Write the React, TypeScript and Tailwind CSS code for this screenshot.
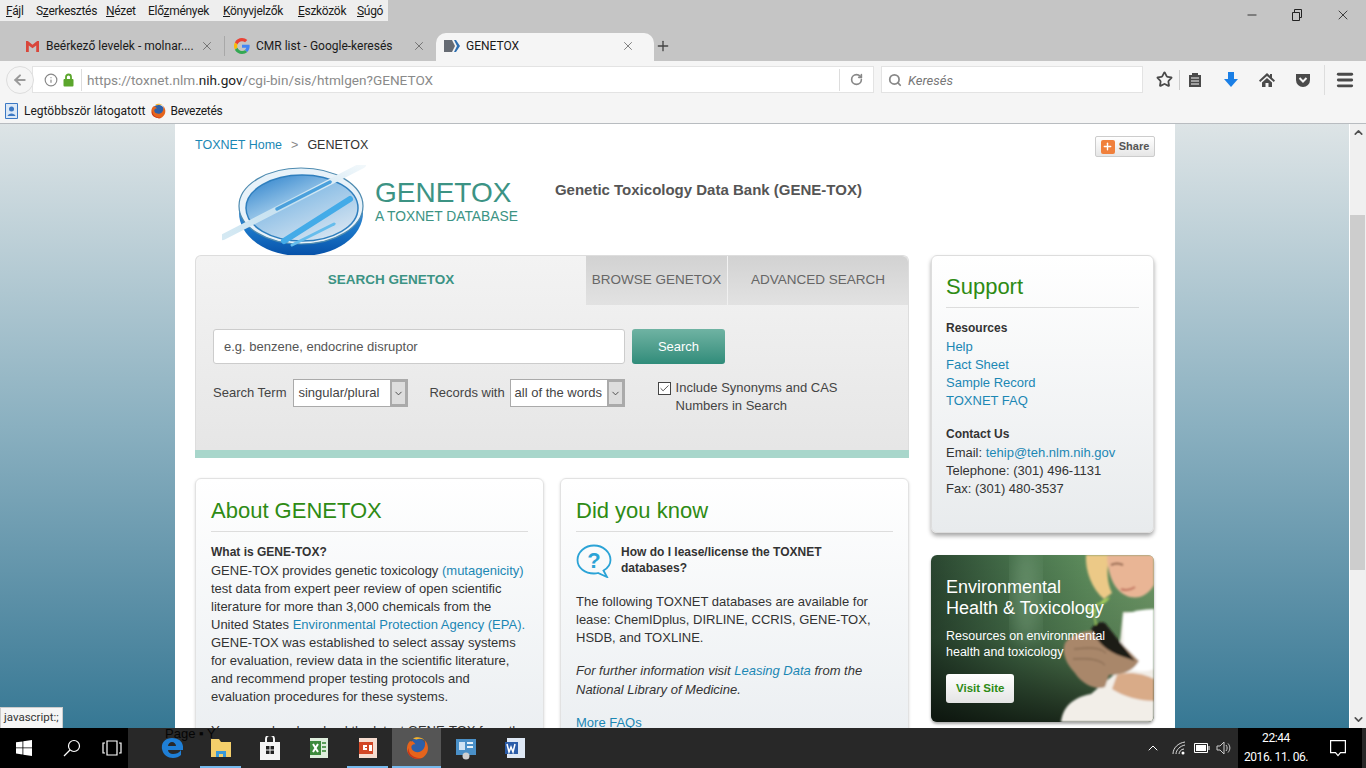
import { ArrowLeft, Check, ChevronDown, ChevronUp, Info, Menu, Minus, Plus, RotateCw, Search, Star, X } from "lucide-react"

const chromeFont = "font-['Roboto',sans-serif]"
const pageFont = "font-['Liberation_Sans',Arial,sans-serif]"

const menus = [
  { before: "", key: "F", after: "ájl", width: "w-[18px]" },
  { before: "S", key: "z", after: "erkesztés", width: "w-[58px]" },
  { before: "", key: "N", after: "ézet", width: "w-[30px]" },
  { before: "Elő", key: "z", after: "mények", width: "w-[63px]" },
  { before: "", key: "K", after: "önyvjelzők", width: "w-[63px]" },
  { before: "", key: "E", after: "szközök", width: "w-[47px]" },
  { before: "", key: "S", after: "úgó", width: "w-[27px]" },
]

const GmailIcon = () => (
  <svg width="15" height="13" viewBox="0 0 16 14">
    <path d="M1 1h2l5 4 5-4h2v12h-3V6L8 9 4 6v7H1z" fill="#d9463a" />
  </svg>
)

const GoogleIcon = () => (
  <svg width="16" height="16" viewBox="0 0 48 48">
    <path fill="#EA4335" d="M24 9.500c3.500 0 6.700 1.300 9.100 3.500l6.800-6.800C35.800 2.400 30.300 0 24 0 14.600 0 6.500 5.400 2.600 13.200l7.900 6.200C12.400 13.700 17.700 9.500 24 9.500z" />
    <path fill="#4285F4" d="M47 24.500c0-1.600-.1-3.100-.4-4.500H24v9h12.900c-.6 3-2.200 5.500-4.700 7.200l7.300 5.700C43.800 37.900 47 31.800 47 24.500z" />
    <path fill="#FBBC05" d="M10.500 28.600c-.5-1.400-.8-3-.8-4.600s.3-3.200.8-4.600l-7.900-6.200C.9 16.500 0 20.100 0 24s.9 7.500 2.600 10.800z" />
    <path fill="#34A853" d="M24 48c6.500 0 11.900-2.100 15.900-5.800l-7.300-5.700c-2.200 1.500-5 2.300-8.600 2.300-6.300 0-11.600-4.200-13.500-9.900l-7.900 6.200C6.500 42.600 14.600 48 24 48z" />
  </svg>
)

const ToxnetTabIcon = () => (
  <svg width="16" height="16" viewBox="0 0 16 16">
    <path d="M0 2h8l3 6-3 6H0z" fill="#666b73" />
    <path d="M10 2h2l4 6-4 6h-2l3-6z" fill="#2f6fb0" />
  </svg>
)

const FirefoxIcon = ({ size }: { size: number }) => (
  <svg width={size} height={size} viewBox="0 0 24 24">
    <circle cx="12.500" cy="11" r="8.500" fill="#2d5fa8" />
    <path d="M5 5C2 8 1 13 3 17c2.500 5 9 7 14 5 5-2.500 7-8 5.500-13-.5-2-1.500-3.500-3-5 1 2.500 1 6-1 9-2 3-6 4-9 2.500-2.500-1-3.500-3.500-3-5.500 1-1.500 3-2 4-1.500C10 7 8 6 7.500 5 6.800 5.500 6 5.500 5 5z" fill="#e5641c" />
    <path d="M8 2.500C11 .5 16 .5 19.500 4c-3-1.500-6-1.500-8-.5C10 3.200 9 3 8 2.500z" fill="#f7b42c" />
    <path d="M3 17c2.500 5 9 7 14 5-5 .5-10-1-12.500-5.500-.5-1-1-3-1-4.500-.8 1.500-.8 3.500-.5 5z" fill="#c8341a" />
  </svg>
)

const BookmarksFolderIcon = () => (
  <svg width="15" height="16" viewBox="0 0 15 16">
    <path d="M1.500.5h12v15h-12z" fill="#dbe8f6" stroke="#3b78c4" />
    <circle cx="7.500" cy="6" r="2.500" fill="#3b78c4" />
    <path d="M3.500 13c1-3.500 7-3.500 8 0z" fill="#3b78c4" />
  </svg>
)

const PocketIcon = () => (
  <svg width="16" height="16" viewBox="0 0 16 16">
    <path d="M1 2h14v6a7 7 0 0 1-14 0z" fill="#4a4a4a" />
    <path d="M4.500 6l3.500 3.500L11.500 6" fill="none" stroke="#f5f5f5" strokeWidth="2" />
  </svg>
)

const ReaderIcon = () => (
  <svg width="14" height="16" viewBox="0 0 14 16">
    <path d="M1 3h3V1h6v2h3v12H1z" fill="#4a4a4a" />
    <path d="M3 6h8M3 9h8M3 12h8" stroke="#f5f5f5" />
  </svg>
)

const HomeIcon = () => (
  <svg width="16" height="16" viewBox="0 0 16 16">
    <path d="M8 1 0 8.500 1.200 10 8 4l6.800 6L16 8.500 13 5.700V2h-2v1.800z" fill="#4a4a4a" />
    <path d="M3 10.500 8 6l5 4.500V15H9.500v-4h-3v4H3z" fill="#4a4a4a" />
  </svg>
)

const LockIcon = () => (
  <svg width="11" height="14" viewBox="0 0 11 14" className="ml-[5px]">
    <path d="M3 6V4a2.500 2.500 0 0 1 5 0v2" fill="none" stroke="#5ba62c" strokeWidth="1.800" />
    <rect x="0.500" y="6" width="10" height="7.500" rx="1" fill="#5ba62c" />
  </svg>
)

const PetriDish = () => (
  <svg width="148" height="90" viewBox="0 0 148 90" className="shrink-0">
    <defs>
      <linearGradient id="dishBase" x1="0" y1="0" x2="0" y2="1">
        <stop offset="0" stopColor="#7fb8de" />
        <stop offset="0.7" stopColor="#1a76c8" />
        <stop offset="1" stopColor="#0650a8" />
      </linearGradient>
      <linearGradient id="dishLiquid" x1="0.100" y1="0" x2="0.800" y2="1">
        <stop offset="0" stopColor="#2f83cc" />
        <stop offset="0.4" stopColor="#8fc0e6" />
        <stop offset="1" stopColor="#dbe7f2" />
      </linearGradient>
      <linearGradient id="rodFade" x1="0" y1="1" x2="1" y2="0">
        <stop offset="0" stopColor="#d5e9f3" />
        <stop offset="0.5" stopColor="#c4e0f0" />
        <stop offset="1" stopColor="#f2f8fb" />
      </linearGradient>
    </defs>
    <ellipse cx="79" cy="48" rx="62" ry="43" fill="url(#dishBase)" />
    <ellipse cx="79" cy="41" rx="62" ry="38" fill="#e8f2f9" stroke="#4e8bb0" strokeWidth="1.200" />
    <ellipse cx="80" cy="43" rx="56" ry="33" fill="url(#dishLiquid)" stroke="#2f7fbe" strokeWidth="1.500" />
    <path d="M62 76 L128 34" stroke="#43abe8" strokeWidth="6" strokeLinecap="round" />
    <path d="M70 80 L112 59" stroke="#66bdec" strokeWidth="3" strokeLinecap="round" />
    <path d="M1 72 L141 0" stroke="url(#rodFade)" strokeWidth="6" strokeLinecap="round" />
    <path d="M55 44 L108 17" stroke="#4aa0dc" strokeWidth="3.500" strokeLinecap="round" />
  </svg>
)

const QuestionBubble = () => (
  <svg width="36" height="34" viewBox="0 0 36 34" className="shrink-0">
    <path d="M18 1.500C9 1.500 1.500 8 1.500 16S9 29.500 18 29.500c1.500 0 3-.2 4-.5L31 33l-3.500-6.500C32 24 34.500 20.500 34.500 16 34.500 8 27 1.500 18 1.500z" fill="none" stroke="#2ba3d6" strokeWidth="1.800" />
    <text x="18" y="24" textAnchor="middle" fontSize="22" fontWeight="700" fill="#2ba3d6" fontFamily="Liberation Sans">?</text>
  </svg>
)

const BannerPhoto = () => (
  <svg width="223" height="167" viewBox="0 0 223 167" className="absolute left-0 top-0">
    <defs>
      <linearGradient id="bannerBg" x1="0" y1="0" x2="1" y2="0">
        <stop offset="0" stopColor="#2a4630" />
        <stop offset="0.4" stopColor="#47724c" />
        <stop offset="0.7" stopColor="#5d8c5c" />
        <stop offset="1" stopColor="#6f9a68" />
      </linearGradient>
      <linearGradient id="bannerShade" x1="0" y1="0" x2="0" y2="1">
        <stop offset="0" stopColor="#000" stopOpacity="0" />
        <stop offset="0.5" stopColor="#000" stopOpacity="0.150" />
        <stop offset="1" stopColor="#000" stopOpacity="0.700" />
      </linearGradient>
      <filter id="soft"><feGaussianBlur stdDeviation="1.300" /></filter>
      <filter id="softer"><feGaussianBlur stdDeviation="9" /></filter>
    </defs>
    <rect width="223" height="167" fill="url(#bannerBg)" />
    <rect width="223" height="167" fill="url(#bannerShade)" />
    <ellipse cx="95" cy="40" rx="14" ry="50" fill="#7fa582" opacity="0.500" filter="url(#softer)" />
    <g filter="url(#soft)">
      <path d="M130 167c2-14 10-24 30-28l26-22 6-60 31 0v110z" fill="#f2eee8" />
      <path d="M192 60c10-4 20-6 31-6v60c-10 4-22 2-30-2z" fill="#ffffff" />
      <path d="M155 0h24c-4 14-3 28 2 38l-8 6c-12-10-19-28-18-44z" fill="#ecc987" />
      <path d="M176 0h47v30c-6 10-14 14-24 12-14-4-22-18-23-42z" fill="#e9b595" />
      <path d="M190 34c5 2 10 1 14-2" stroke="#c0705c" strokeWidth="2" fill="none" />
      <path d="M180 10c4-2 8-2 12 0" stroke="#8d6048" strokeWidth="2" fill="none" />
      <path d="M134 88c8-12 34-16 48-8l26 26c-6 10-16 14-30 14l-4 12c-10 4-24-4-30-14-8-8-14-20-10-30z" fill="#a9876a" />
      <path d="M186 120c10-4 26-2 37 4v22c-14 0-30-4-42-12z" fill="#d9ab88" />
      <path d="M160 74c4-6 10-8 14-6l30 38c-10-4-20-6-28-12-6-4-12-12-16-20z" fill="#1f1a14" />
      <path d="M143 94c6 0 24-4 32 4M142 104c8 0 24-2 32 6" stroke="#7d5f48" strokeWidth="1" fill="none" />
      <path d="M165 70c-2-8-2-14 2-22" stroke="#a6cf5b" strokeWidth="1.500" fill="none" />
      <path d="M167 50c4-6 8-6 12-8-2 4-6 8-12 8zM166 56c-6-2-8-4-12-4 4 4 8 6 12 4z" fill="#a6cf5b" />
    </g>
  </svg>
)

const WindowsLogo = () => (
  <svg width="16" height="16" viewBox="0 0 16 16" fill="#fff">
    <path d="M0 2.300 6.500 1.400V7.500H0zM7.300 1.300 16 0V7.500H7.300zM0 8.300h6.500v6.200L0 13.600zM7.300 8.300H16V16L7.300 14.700z" />
  </svg>
)

const TaskIcon = ({ active, running, children }: { active?: boolean; running?: boolean; children: React.ReactNode }) => (
  <div className={`relative z-10 flex h-10 w-[49px] items-center justify-center ${active ? "bg-[#555555]" : ""}`}>
    {children}
    {running && <div className={`absolute bottom-0 h-[2px] bg-[#76b9ed] ${active ? "left-0 right-0" : "left-[4px] right-[4px]"}`} />}
  </div>
)

const Card = ({ title, children }: { title: string; children: React.ReactNode }) => (
  <div className="rounded-md border border-[#e2e2e2] bg-gradient-to-b from-white to-[#e9edf0] px-[15px] pb-6 pt-[17px] shadow-[0_1px_3px_rgba(0,0,0,0.15)]">
    <h2 className="border-b border-[#dddddd] pb-[5px] text-[22px] leading-[30px] text-[#2e8b14]">{title}</h2>
    {children}
  </div>
)

const SupportCard = () => (
  <div className="ml-[1px] h-[278px] rounded-md border border-[#dddddd] bg-gradient-to-b from-white to-[#e8ebed] px-[14px] pt-[16px] text-[13px] leading-[18px] text-[#333333] shadow-[0_3px_4px_rgba(0,0,0,0.35)]">
    <h2 className="border-b border-[#dddddd] pb-[5px] text-[22px] leading-[30px] text-[#2e8b14]">Support</h2>
    <p className="mt-[11px] text-[12px] font-bold">Resources</p>
    <ul className="mt-[1px] text-[#1b87b4]">
      <li>Help</li>
      <li>Fact Sheet</li>
      <li>Sample Record</li>
      <li>TOXNET FAQ</li>
    </ul>
    <p className="mt-[15px] text-[12px] font-bold">Contact Us</p>
    <p className="mt-[1px]">Email: <span className="text-[#1b87b4]">tehip@teh.nlm.nih.gov</span></p>
    <p>Telephone: (301) 496-1131</p>
    <p>Fax: (301) 480-3537</p>
  </div>
)

const EnvBanner = () => (
  <div className="relative ml-[1px] mt-[22px] h-[167px] overflow-hidden rounded-md text-white shadow-[0_2px_3px_rgba(0,0,0,0.35)]">
    <BannerPhoto />
    <div className="relative flex flex-col items-start px-[15px] pt-[22px]">
      <h2 className="text-[18px] leading-[21px]">Environmental<br />Health &amp; Toxicology</h2>
      <p className="mt-[9px] text-[12.5px] leading-[16px]">Resources on environmental<br />health and toxicology</p>
      <div className="mt-[14px] rounded-[3px] bg-gradient-to-b from-white to-[#e4e4e4] px-[10px] py-[7px] text-[11.5px] font-bold leading-[15px] text-[#2e8b14]">Visit Site</div>
    </div>
  </div>
)

export default function App() {
  return (
    <div className="flex h-screen w-full flex-col overflow-hidden bg-[#c5c5c5]">
      <div className={`shrink-0 ${chromeFont} text-[12px] text-[#1a1a1a]`}>
        <div className="flex h-[33px] items-start justify-between">
          <div className="flex h-[21px] items-center gap-[12px] bg-[#eeeeee] pl-[6px] pr-[4px] tracking-[-0.3px]">
            {menus.map((m) => (
              <span key={m.before + m.after} className={`whitespace-nowrap ${m.width}`}>
                {m.before}
                <span className="underline">{m.key}</span>
                {m.after}
              </span>
            ))}
          </div>
          <div className="flex items-center gap-[32px] pr-[15px] pt-[7px] text-[#222222]">
            <Minus size={14} strokeWidth={1.5} />
            <svg width="12" height="12" viewBox="0 0 12 12" fill="none" stroke="currentColor">
              <path d="M1.500 3.500h7v8h-7zM3.500 3.500V.5h7v8h-2" />
            </svg>
            <X size={16} strokeWidth={1.25} />
          </div>
        </div>

        <div className="flex h-[28px] items-start">
          <div className="ml-[25px] flex h-[26px] w-[189px] items-center">
            <GmailIcon />
            <span className="ml-[6px] whitespace-nowrap">Beérkező levelek - molnar....</span>
            <X size={14} strokeWidth={1.25} className="ml-auto shrink-0 text-[#555555]" />
          </div>
          <div className="ml-[10px] mt-[3px] h-[20px] w-px bg-[#a8a8a8]" />
          <div className="ml-[9px] flex h-[26px] w-[192px] items-center">
            <GoogleIcon />
            <span className="ml-[6px] whitespace-nowrap">CMR list - Google-keresés</span>
            <X size={14} strokeWidth={1.25} className="ml-auto shrink-0 text-[#555555]" />
          </div>
          <div className="ml-[10px] flex h-[28px] w-[218px] items-center rounded-t-[10px] bg-[#f5f5f5] pb-[2px] pl-[8px] pr-[19px]">
            <ToxnetTabIcon />
            <span className="ml-[6px] flex-1">GENETOX</span>
            <X size={14} strokeWidth={1.25} className="text-[#555555]" />
          </div>
          <Plus size={16} strokeWidth={2} className="ml-[1px] mt-[5px] text-[#444444]" />
        </div>

        <div className="flex h-[37px] items-center bg-[#f5f5f5] pl-[6px] text-[#4a4a4a]">
          <div className="z-10 flex h-[28px] w-[28px] items-center justify-center rounded-full border border-[#dddddd] bg-[#f5f5f5] text-[#9a9a9a]">
            <ArrowLeft size={16} strokeWidth={3} />
          </div>
          <div className="-ml-[2px] flex h-[27px] w-[842px] items-center border border-[#e3e3e3] bg-white pl-[11px]">
            <Info size={14} className="text-[#888888]" />
            <LockIcon />
            <div className="ml-[7px] h-[22px] w-px bg-[#dddddd]" />
            <span className="ml-[5px] flex-1 pt-[2px] text-[13.6px] text-[#8a8a8a]">
              https://toxnet.nlm.<span className="text-[#222222]">nih.gov</span>/cgi-bin/sis/htmlgen?GENETOX
            </span>
            <div className="h-[22px] w-px bg-[#dddddd]" />
            <RotateCw size={13} strokeWidth={3} className="mx-[10px] text-[#888888]" />
          </div>
          <div className="ml-[7px] flex h-[27px] w-[262px] items-center border border-[#e3e3e3] bg-white pl-[6px]">
            <Search size={14} strokeWidth={3} className="text-[#888888]" />
            <span className="ml-[6px] pt-[2px] text-[13px] italic text-[#777777]">Keresés</span>
          </div>
          <Star size={17} strokeWidth={2.5} className="ml-[13px]" />
          <div className="ml-[6px] h-[20px] w-px bg-[#cccccc]" />
          <div className="ml-[8px]"><ReaderIcon /></div>
          <svg width="16" height="16" viewBox="0 0 16 16" className="ml-[21px]">
            <path d="M5 0h6v7h4l-7 8-7-8h4z" fill="#1a7fe6" />
          </svg>
          <div className="ml-[20px]"><HomeIcon /></div>
          <div className="ml-[20px]"><PocketIcon /></div>
          <div className="ml-[13px] h-[30px] w-px bg-[#dddddd]" />
          <Menu size={20} strokeWidth={3.5} className="ml-[10px]" />
        </div>

        <div className="flex h-[26px] items-center border-b border-[#b8bcc0] bg-[#f5f5f5] pl-[4px] pt-[1px]">
          <BookmarksFolderIcon />
          <span className="ml-[5px]">Legtöbbször látogatott</span>
          <span className="ml-[4px]"><FirefoxIcon size={16} /></span>
          <span className="ml-[5px] tracking-[-0.3px]">Bevezetés</span>
        </div>
      </div>

      <div className="relative flex min-h-0 flex-1 overflow-hidden bg-gradient-to-b from-[#dde4e6] via-[#8ab0c0] to-[#367894]">
        <div className={`ml-[175px] w-[1000px] shrink-0 bg-white px-[20px] pt-[12px] ${pageFont}`}>
          <div className="flex h-[21px] items-start justify-between">
            <div className="mt-[1px] text-[12.5px] leading-[16px]">
              <span className="text-[#1b87b4]">TOXNET Home</span>
              <span className="mx-[9px] text-[#888888]">&gt;</span>
              <span className="text-[#333333]">GENETOX</span>
            </div>
            <div className="flex h-[21px] w-[60px] items-center justify-center gap-[4px] rounded-[2px] border border-[#cccccc] bg-gradient-to-b from-white to-[#e6e6e6] text-[11px] font-bold text-[#555555]">
              <span className="flex h-[14px] w-[14px] items-center justify-center rounded-[2px] bg-[#f0803c] text-white">
                <Plus size={11} strokeWidth={3} />
              </span>
              Share
            </div>
          </div>

          <div className="flex h-[98px] items-start pl-[27px] pt-[8px]">
            <PetriDish />
            <div className="ml-[5px] pt-[12px] text-[#3c9384]">
              <div className="text-[28px] leading-[32px]">GENETOX</div>
              <div className="mt-[1px] whitespace-nowrap text-[13.8px] leading-[14px]">A TOXNET DATABASE</div>
            </div>
            <div className="ml-[37px] pt-[15px] text-[15px] font-bold leading-[20px] text-[#555555]">Genetic Toxicology Data Bank (GENE-TOX)</div>
          </div>

          <div className="flex gap-[21px]">
            <div className="w-[714px] shrink-0">
              <div className="h-[195px] rounded-t-md border border-b-0 border-[#dddddd] bg-gradient-to-b from-[#f3f3f3] to-[#e6e6e6]">
                <div className="flex h-[49px] text-[13.5px]">
                  <div className="flex flex-1 items-center justify-center font-bold text-[#3c9384]">SEARCH GENETOX</div>
                  <div className="flex w-[141px] items-center justify-center bg-gradient-to-b from-[#d2d2d2] to-[#e2e2e2] text-[#666666]">BROWSE GENETOX</div>
                  <div className="ml-[1px] flex w-[180px] items-center justify-center rounded-tr-md bg-gradient-to-b from-[#d2d2d2] to-[#e2e2e2] text-[#666666]">ADVANCED SEARCH</div>
                </div>
                <div className="ml-[17px] mt-[24px] flex">
                  <div className="flex h-[35px] w-[412px] items-center rounded-[3px] border border-[#cccccc] bg-white pl-[10px] text-[13px] text-[#555555]">e.g. benzene, endocrine disruptor</div>
                  <div className="ml-[7px] flex h-[35px] w-[93px] items-center justify-center rounded-[3px] bg-gradient-to-b from-[#6fb3a3] to-[#2f8c7a] text-[13px] text-white">Search</div>
                </div>
                <div className="ml-[17px] mt-[15px] flex items-start text-[13px] text-[#444444]">
                  <span className="leading-[28px]">Search Term</span>
                  <div className="ml-[7px] flex h-[28px] w-[115px] items-center border border-[#aaaaaa] bg-white pl-[4px]">
                    <span className="flex-1 whitespace-nowrap">singular/plural</span>
                    <span className="flex h-full w-[17px] items-center justify-center border-2 border-[#aaaaaa] bg-[#dddddd]"><ChevronDown size={11} /></span>
                  </div>
                  <span className="ml-[21px] leading-[28px]">Records with</span>
                  <div className="ml-[5px] flex h-[28px] w-[115px] items-center border border-[#aaaaaa] bg-white pl-[4px]">
                    <span className="flex-1 whitespace-nowrap">all of the words</span>
                    <span className="flex h-full w-[17px] items-center justify-center border-2 border-[#aaaaaa] bg-[#dddddd]"><ChevronDown size={11} /></span>
                  </div>
                  <div className="ml-[33px] flex items-start">
                    <span className="mt-[3px] flex h-[13px] w-[13px] items-center justify-center border border-[#444444] bg-white">
                      <Check size={11} strokeWidth={2} />
                    </span>
                    <span className="ml-[5px] w-[190px] leading-[18px]">Include Synonyms and CAS Numbers in Search</span>
                  </div>
                </div>
              </div>
              <div className="h-[8px] bg-[#a8d6cb]" />

              <div className="mt-[20px] grid grid-cols-[349px_349px] gap-[16px] whitespace-nowrap text-[13px] leading-[18px] text-[#333333]">
                <Card title="About GENETOX">
                  <p className="mt-[11px] text-[12px] font-bold">What is GENE-TOX?</p>
                  <p className="mt-[1px]">
                    GENE-TOX provides genetic toxicology <span className="text-[#1b87b4]">(mutagenicity)</span><br />
                    test data from expert peer review of open scientific<br />
                    literature for more than 3,000 chemicals from the<br />
                    United States <span className="text-[#1b87b4]">Environmental Protection Agency (EPA).</span><br />
                    GENE-TOX was established to select assay systems<br />
                    for evaluation, review data in the scientific literature,<br />
                    and recommend proper testing protocols and<br />
                    evaluation procedures for these systems.
                  </p>
                  <p className="mt-[16px]">You may also download the latest GENE-TOX from the</p>
                </Card>
                <Card title="Did you know">
                  <div className="mt-[12px] flex gap-[9px]">
                    <QuestionBubble />
                    <p className="text-[12px] font-bold leading-[16px]">How do I lease/license the TOXNET<br />databases?</p>
                  </div>
                  <p className="mt-[15px]">The following TOXNET databases are available for<br />lease: ChemIDplus, DIRLINE, CCRIS, GENE-TOX,<br />HSDB, and TOXLINE.</p>
                  <p className="mt-[14px] leading-[19px]"><i>For further information visit <span className="text-[#1b87b4]">Leasing Data</span> from the<br />National Library of Medicine.</i></p>
                  <p className="mt-[15px] text-[#1b87b4]">More FAQs</p>
                </Card>
              </div>
            </div>

            <div className="w-[224px] shrink-0">
              <SupportCard />
              <EnvBanner />
            </div>
          </div>
        </div>

        <div className="ml-auto flex h-full w-[17px] flex-col items-center justify-between border-l border-white bg-[#f0f0f0] py-[2px] text-[#505050]">
          <ChevronUp size={13} strokeWidth={3} />
          <ChevronDown size={13} strokeWidth={3} />
        </div>
        <div className="absolute right-[1px] top-[91px] h-[355px] w-[15px] bg-[#cdcdcd]" />
        <div className={`absolute bottom-0 left-0 flex h-[21px] items-center border border-b-0 border-[#cccccc] bg-[#f5f5f5] px-[3px] text-[11.5px] text-[#333333] ${chromeFont}`}>javascript:;</div>
      </div>

      <div className="relative flex h-10 shrink-0 items-center bg-[#282828] text-white">
        <span className="absolute left-[165px] top-[-1px] font-['Liberation_Sans',sans-serif] text-[13px] leading-[14px] text-[#050505]">Page ▪ Y</span>
        <div className="flex h-full w-[128px] shrink-0 items-center bg-black">
          <div className="flex w-[48px] justify-center"><WindowsLogo /></div>
          <div className="flex w-[48px] justify-center">
            <svg width="18" height="18" viewBox="0 0 18 18" fill="none" stroke="#fff" strokeWidth="1.200">
              <circle cx="11" cy="7" r="5.500" />
              <path d="M7 11l-6 6" />
            </svg>
          </div>
          <div className="flex w-[32px] justify-center">
            <svg width="20" height="16" viewBox="0 0 20 16" fill="none" stroke="#fff" strokeWidth="1.200">
              <path d="M5 1h10v14H5zM3 3H1v10h2M17 3h2v10h-2" />
            </svg>
          </div>
        </div>
        <div className="ml-[19px] flex">
          <TaskIcon>
            <svg width="22" height="24" viewBox="0 0 22 24">
              <path d="M11 2C4 2 0 7 1 13c1 6 6 9 11 9 3 0 6-1 8-3v-5c-2 3-5 4-8 4-3 0-5-2-5-4h15C23 6 18 2 11 2zM7 10c0-2 2-4 4-4s4 2 4 4z" fill="#1f7fd6" />
            </svg>
          </TaskIcon>
          <TaskIcon running>
            <svg width="22" height="22" viewBox="0 0 22 22"><path d="M1 2h8l2 3h10v15H1z" fill="#f4cf6b" /><path d="M6 20v-6h10v6" fill="#3a9ad9" /><path d="M9 20v-3h4v3" fill="#f4cf6b" /></svg>
          </TaskIcon>
          <TaskIcon>
            <svg width="22" height="24" viewBox="0 0 22 24"><path d="M1 6h20v18H1z" fill="#f5f5f5" /><path d="M7 6V3a4 4 0 0 1 8 0v3" fill="none" stroke="#f5f5f5" strokeWidth="2" /><path d="M7 10h3.500v3.500H7zM11.500 10H15v3.500h-3.500zM7 14.500h3.500V18H7zM11.500 14.500H15V18h-3.500z" fill="#222" /></svg>
          </TaskIcon>
          <TaskIcon>
            <svg width="24" height="24" viewBox="0 0 24 24"><path d="M3 2h18v20H3z" fill="#dfeedd" /><path d="M3 5h11v14H3z" fill="#3d8b3d" /><path d="M6 8l5 8M11 8l-5 8" stroke="#fff" strokeWidth="2" /><path d="M15 7h4M15 11h4M15 15h4" stroke="#5b9e5b" strokeWidth="2" /></svg>
          </TaskIcon>
          <TaskIcon running>
            <svg width="24" height="24" viewBox="0 0 24 24"><path d="M3 2h18v20H3z" fill="#f6dccf" /><path d="M3 6h14v12H3z" fill="#d24726" /><path d="M7 9h4v2H9v1h2v2H7zM13 9h3v6h-3z" fill="#fff" /></svg>
          </TaskIcon>
          <TaskIcon active running><FirefoxIcon size={24} /></TaskIcon>
          <TaskIcon>
            <svg width="24" height="24" viewBox="0 0 24 24"><path d="M2 3h20v16H2z" fill="#4a90c8" /><path d="M5 6h6v8H5z" fill="#cfe3f3" /><path d="M13 6h6v2h-6zM13 10h6v2h-6z" fill="#e8f2fa" /><circle cx="12" cy="20" r="3.500" fill="#d0d0d0" /></svg>
          </TaskIcon>
          <TaskIcon>
            <svg width="24" height="24" viewBox="0 0 24 24"><path d="M4 2h18v20H4z" fill="#dfe8f5" /><path d="M2 6h13v12H2z" fill="#2b5ca8" /><path d="M4 8l2 8 2-5 2 5 2-8" fill="none" stroke="#fff" strokeWidth="1.500" /></svg>
          </TaskIcon>
        </div>

        <div className="ml-auto flex h-full items-center">
          <ChevronUp size={16} strokeWidth={1.5} />
          <svg width="14" height="14" viewBox="0 0 14 14" fill="none" stroke="#ddd" className="ml-[11px]">
            <path d="M1 13C1 7 6 2 13 1M4 13c0-4 4-8 9-9M7 13c0-2 2-5 5-5" />
            <circle cx="11" cy="12" r="1.500" fill="#fff" stroke="none" />
          </svg>
          <svg width="16" height="12" viewBox="0 0 16 12" className="ml-[8px]" fill="none" stroke="#fff">
            <path d="M.5 1.500h13v9H.5z" /><rect x="2" y="3" width="10" height="6" fill="#fff" stroke="none" /><path d="M15 4v4" />
          </svg>
          <svg width="16" height="14" viewBox="0 0 16 14" className="ml-[6px]" fill="none" stroke="#ccc">
            <path d="M1 5h3l4-4v12L4 9H1zM10 4c1.500 2 1.500 4 0 6M12 2.500c2.500 3 2.500 6 0 9" />
          </svg>
          <div className={`ml-[6px] flex h-full w-[76px] flex-col items-center justify-center bg-black text-[12px] leading-[19px] tracking-[-0.4px] ${chromeFont}`}>
            <span>22:44</span>
            <span>2016. 11. 06.</span>
          </div>
          <div className="flex h-full w-[48px] items-center justify-center bg-black">
            <svg width="16" height="17" viewBox="0 0 16 17" fill="none" stroke="#fff" strokeWidth="1.200"><path d="M.6.6h14.800v12H10.500l-2.500 3-2.500-3H.6z" /></svg>
          </div>
          <div className="w-[4px]" />
        </div>
      </div>
    </div>
  )
}
